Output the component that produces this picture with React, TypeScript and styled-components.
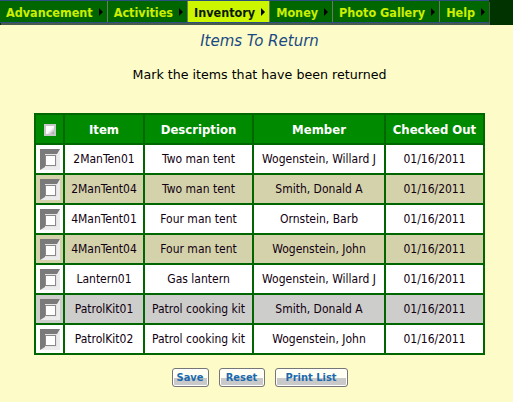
import React from "react";
import styled, { createGlobalStyle } from "styled-components";

const GlobalStyle = createGlobalStyle`
  html, body { margin: 0; padding: 0; }
  body {
    background-color: #fdfcc9;
    font-family: "DejaVu Sans", Verdana, sans-serif;
    width: 513px;
    height: 402px;
    overflow: hidden;
  }
`;

const NavBar = styled.div`
  display: flex;
  align-items: flex-start;
  height: 25px;
  background: #003300;
`;

const NavList = styled.ul`
  display: flex;
  flex-shrink: 0;
  margin: 0;
  padding: 0;
  list-style: none;
  height: 21px;
  border-top: 1px solid #2b4f7e;
  border-bottom: 1px solid #2b4f7e;
  box-shadow: 1px 2px 0 #4a5a4a;
`;

const NavItem = styled.li<{ $active?: boolean }>`
  display: flex;
  align-items: center;
  flex-shrink: 0;
  white-space: nowrap;
  gap: 6px;
  padding: 1px 4px 0 6px;
  background: ${(p) => (p.$active ? "#ccf500" : "#006600")};
  color: ${(p) => (p.$active ? "#0a1a00" : "#ccee00")};
  border-right: 1px solid #6a7a6a;
  font-family: "DejaVu Sans Condensed", "DejaVu Sans", sans-serif;
  font-weight: bold;
  font-size: 12.5px;
  &:last-child { border-right: none; }
`;

const Arrow = styled.span`
  width: 0;
  height: 0;
  border-top: 4px solid transparent;
  border-bottom: 4px solid transparent;
  border-left: 4px solid #000;
`;

const Main = styled.main`
  padding-left: 6px;
  display: flex;
  flex-direction: column;
  align-items: center;
`;

const Title = styled.h1`
  margin: 6px 0 0;
  font-size: 15px;
  line-height: 20px;
  font-weight: normal;
  font-style: italic;
  color: #1a4a84;
`;

const Subtitle = styled.p`
  margin: 14px 0 0;
  font-size: 12.65px;
  line-height: 20px;
  color: #000;
`;

const Table = styled.table`
  margin-top: 28px;
  width: 451px;
  table-layout: fixed;
  border-collapse: separate;
  border-spacing: 2px;
  background: #006600;
  font-family: "DejaVu Sans Condensed", "DejaVu Sans", sans-serif;
  font-size: 12px;
`;

const Th = styled.th<{ $w: number }>`
  width: ${(p) => p.$w}px;
  height: 28px;
  padding: 0;
  background: #008a00;
  color: #fff;
  font-weight: bold;
  font-size: 13px;
  text-align: center;
`;

const Row = styled.tr<{ $tone: "white" | "tan" | "gray" }>`
  background: ${(p) =>
    p.$tone === "tan" ? "#d4d2aa" : p.$tone === "gray" ? "#cdcdcb" : "#ffffff"};
`;

const Td = styled.td`
  height: 28px;
  padding: 0;
  text-align: center;
  white-space: nowrap;
  overflow: hidden;
  color: #110011;
`;

const BevelBox = styled.span`
  display: inline-flex;
  align-items: center;
  justify-content: center;
  box-sizing: border-box;
  width: 20px;
  height: 21px;
  vertical-align: middle;
  border-style: solid;
  border-width: 5px 3px 3px 5px;
  border-color: #7a7a7a #ececec #ececec #7a7a7a;
  background: #e4e4e4;
`;

const BevelInner = styled.span`
  box-sizing: border-box;
  width: 11px;
  height: 11px;
  background: #fff;
  border: 1px solid #8a8a8a;
`;

const HeadCheck = styled.span`
  display: inline-block;
  box-sizing: border-box;
  width: 12px;
  height: 12px;
  vertical-align: middle;
  border: 2px solid #c8c8c8;
  background: linear-gradient(135deg, #ffffff 0%, #ffffff 50%, #9a9a9a 100%);
`;

const Buttons = styled.div`
  display: flex;
  gap: 10px;
  margin-top: 13px;
`;

const Button = styled.button<{ $w: number }>`
  width: ${(p) => p.$w}px;
  height: 19px;
  padding: 0;
  border: 1px solid #767676;
  border-radius: 3px;
  box-shadow: inset 0 0 0 1px #fff;
  background: linear-gradient(to bottom, #fffff4 0%, #fffff4 50%, #c9c9c9 52%, #c9c9c9 100%);
  color: #1c6aae;
  font-family: "DejaVu Sans Condensed", "DejaVu Sans", sans-serif;
  font-weight: bold;
  font-size: 11px;
  line-height: 17px;
  text-align: center;
`;

const navItems = ["Advancement", "Activities", "Inventory", "Money", "Photo Gallery", "Help"];

const rows: { item: string; desc: string; member: string; date: string; tone: "white" | "tan" | "gray" }[] = [
  { item: "2ManTen01", desc: "Two man tent", member: "Wogenstein, Willard J", date: "01/16/2011", tone: "white" },
  { item: "2ManTent04", desc: "Two man tent", member: "Smith, Donald A", date: "01/16/2011", tone: "tan" },
  { item: "4ManTent01", desc: "Four man tent", member: "Ornstein, Barb", date: "01/16/2011", tone: "white" },
  { item: "4ManTent04", desc: "Four man tent", member: "Wogenstein, John", date: "01/16/2011", tone: "tan" },
  { item: "Lantern01", desc: "Gas lantern", member: "Wogenstein, Willard J", date: "01/16/2011", tone: "white" },
  { item: "PatrolKit01", desc: "Patrol cooking kit", member: "Smith, Donald A", date: "01/16/2011", tone: "gray" },
  { item: "PatrolKit02", desc: "Patrol cooking kit", member: "Wogenstein, John", date: "01/16/2011", tone: "white" },
];

export default function App() {
  return (
    <>
      <GlobalStyle />
      <NavBar>
        <NavList>
          {navItems.map((n) => (
            <NavItem key={n} $active={n === "Inventory"}>
              {n}
              <Arrow />
            </NavItem>
          ))}
        </NavList>
      </NavBar>
      <Main>
        <Title>Items To Return</Title>
        <Subtitle>Mark the items that have been returned</Subtitle>
        <Table>
          <thead>
            <tr>
              <Th $w={27}><HeadCheck /></Th>
              <Th $w={78}>Item</Th>
              <Th $w={107}>Description</Th>
              <Th $w={130}>Member</Th>
              <Th $w={97}>Checked Out</Th>
            </tr>
          </thead>
          <tbody>
            {rows.map((r) => (
              <Row key={r.item} $tone={r.tone}>
                <Td><BevelBox><BevelInner /></BevelBox></Td>
                <Td>{r.item}</Td>
                <Td>{r.desc}</Td>
                <Td>{r.member}</Td>
                <Td>{r.date}</Td>
              </Row>
            ))}
          </tbody>
        </Table>
        <Buttons>
          <Button $w={37}>Save</Button>
          <Button $w={46}>Reset</Button>
          <Button $w={73}>Print List</Button>
        </Buttons>
      </Main>
    </>
  );
}
